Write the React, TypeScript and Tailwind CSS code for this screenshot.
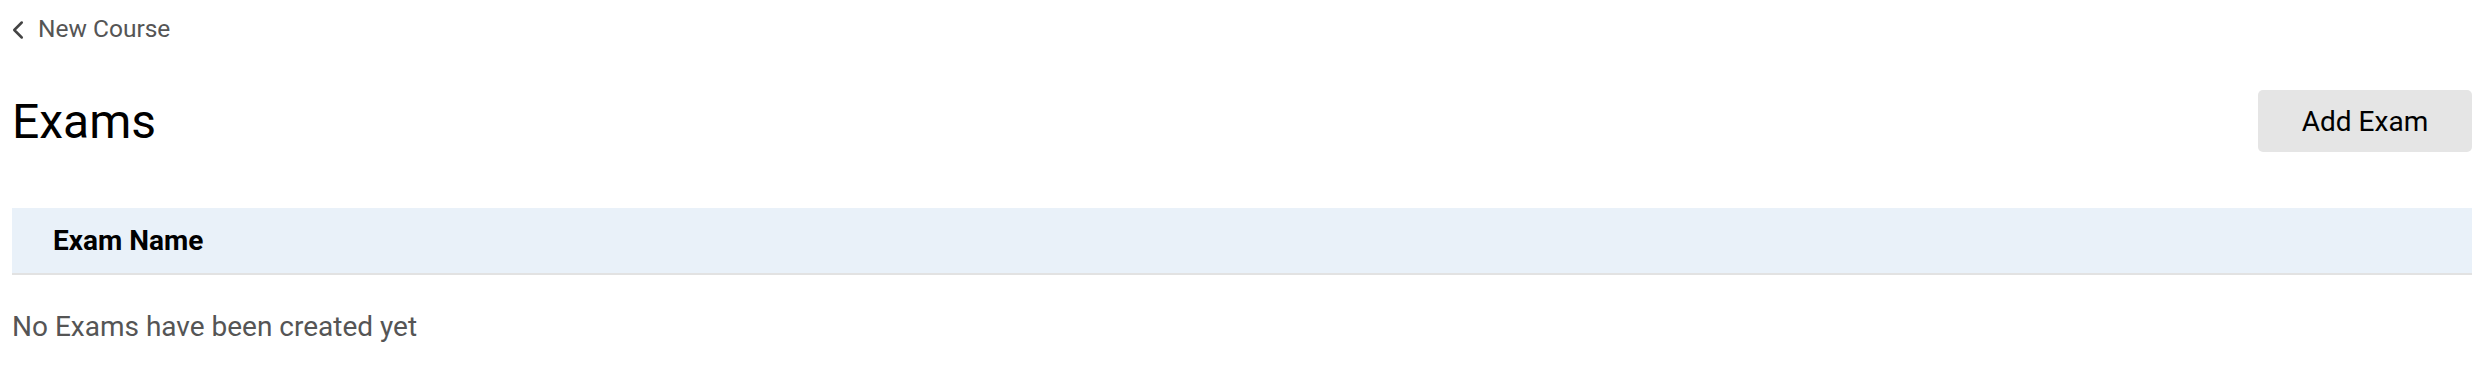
import { ChevronLeft } from "lucide-react"

export default function App() {
  return (
    <div className="min-h-[372px] bg-white px-3 font-['Roboto',sans-serif]">
      {/* Back link */}
      <a href="#" className="flex h-[58px] items-center pt-[1px] text-[24.5px] text-[#555]">
        <ChevronLeft className="-ml-[9px] h-[30px] w-[30px] text-[#444]" strokeWidth={2} />
        <span className="ml-[5px]">New Course</span>
      </a>

      {/* Header */}
      <div className="flex h-[127px] items-center justify-between">
        <h1 className="text-[48px] leading-none text-black">Exams</h1>
        <button className="-mt-[1px] h-[62px] w-[214px] rounded-[5px] bg-[#e5e5e5] pt-[2px] text-[28px] text-black">
          Add Exam
        </button>
      </div>

      {/* Table */}
      <div className="mt-[23px] flex h-[67px] items-center border-b-2 border-[#e2e2e2] bg-[#e9f1f9] pl-[41px] text-[28px] font-bold text-black">
        Exam Name
      </div>
      <p className="pt-[38px] text-[28px] leading-none text-[#555]">No Exams have been created yet</p>
    </div>
  )
}
